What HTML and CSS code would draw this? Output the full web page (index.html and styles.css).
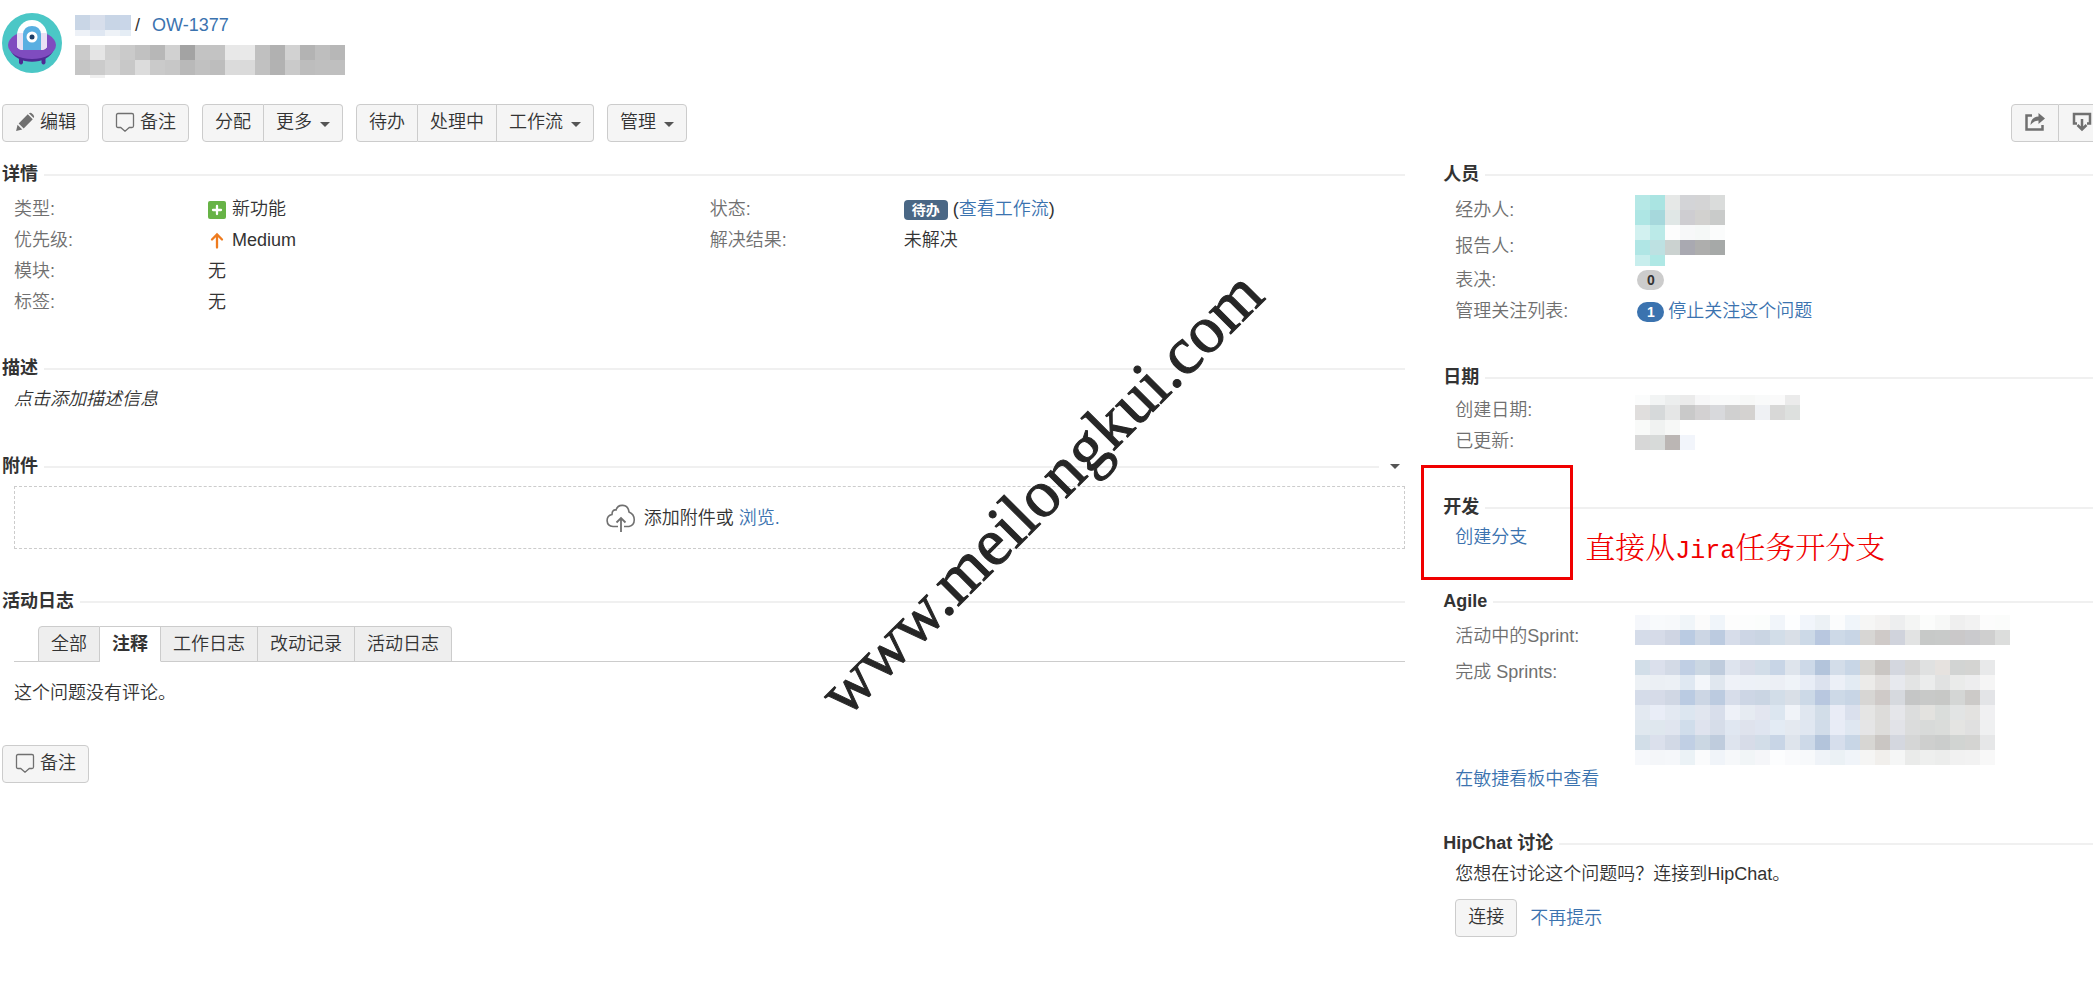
FILE: index.html
```html
<!DOCTYPE html>
<html lang="zh-CN">
<head>
    <meta charset="UTF-8">
    <meta name="viewport" content="width=device-width, initial-scale=1.0">
    <title>OW-1377</title>

    <link rel="stylesheet" href="styles.css">
</head>
<body>
    <!-- shared icons -->
    <svg class="sprite" aria-hidden="true">
        <symbol id="icon-comment" viewBox="0 0 20 20">
            <path d="M3 1.5h14q1.5 0 1.5 1.5v11q0 1.5-1.5 1.5h-2.700L10 19.200 5.700 15.500H3q-1.500 0-1.500-1.500V3q0-1.500 1.500-1.500z" fill="none" stroke="#707070" stroke-width="1.300"/>
        </symbol>
    </svg>

    <header class="issue-header">
        <svg class="avatar" viewBox="0 0 60 60" aria-hidden="true">
            <circle cx="30" cy="30" r="30" fill="#4bc7c6"/>
            <path d="M17 43h4v7q-2 3-4 0zM39.500 43h4v7q-2 3-4 0z" fill="#4f2a93"/>
            <path d="M8 36c5 17 39 17 44 0z" fill="#4f2a93"/>
            <ellipse cx="30" cy="32" rx="24" ry="14" fill="#7f4cbf"/>
            <path d="M15 34V22a15 15 0 0 1 30 0v12q-2 3-6 3H21q-4 0-6-3z" fill="#fff"/>
            <path d="M15 20h6v17q-4 0-6-3zM45 20h-6v17q4 0 6-3z" fill="#e9e0f4"/>
            <path d="M21 37V21q1-8 9-8t9 8v16z" fill="#59afe1"/>
            <circle cx="30" cy="24" r="5.500" fill="#fff"/>
            <circle cx="30" cy="24" r="2.500" fill="#1d3d66"/>
        </svg>
        <div class="issue-title">
            <div class="breadcrumb">
                <svg class="mosaic" data-mosaic="project"></svg>
                <span class="slash">/</span>
                <a href="#">OW-1377</a>
            </div>
            <svg class="mosaic" data-mosaic="summary"></svg>
        </div>
    </header>

    <nav class="toolbar">
        <button type="button" class="btn">
            <svg class="icon" viewBox="0 0 18 18" aria-hidden="true">
                <path d="M1 17l1.300-5.500 4.200 4.200zM3.300 10.300L11.500 2l4.500 4.500-8.200 8.300zM12.500 1.200q1.500-1 3 .3l1 1q1.300 1.500.3 3z" fill="#707070"/>
            </svg>编辑
        </button>
        <button type="button" class="btn"><svg class="icon" aria-hidden="true"><use href="#icon-comment"/></svg>备注</button>
        <div class="btn-group">
            <button type="button" class="btn">分配</button>
            <button type="button" class="btn">更多<span class="caret"></span></button>
        </div>
        <div class="btn-group">
            <button type="button" class="btn">待办</button>
            <button type="button" class="btn">处理中</button>
            <button type="button" class="btn">工作流<span class="caret"></span></button>
        </div>
        <button type="button" class="btn">管理<span class="caret"></span></button>
        <div class="btn-group tools">
            <button type="button" class="btn" aria-label="分享">
                <svg class="icon-tool" viewBox="0 0 20 20" aria-hidden="true">
                    <path d="M7 3.500H1.500v14h16V13" fill="none" stroke="#707070" stroke-width="2.500"/>
                    <path d="M5.500 13q.5-8 8-8.500V1L20 6.500 13.500 12V8.500Q8.500 8.500 5.500 13z" fill="#707070"/>
                </svg>
            </button>
            <button type="button" class="btn" aria-label="导出">
                <svg class="icon-tool" viewBox="0 0 20 20" aria-hidden="true">
                    <path d="M5 11.500H2V2h16v9.500h-3" fill="none" stroke="#707070" stroke-width="2.500"/>
                    <path d="M10 7v10M5.500 13L10 17.500l4.500-4.500" fill="none" stroke="#707070" stroke-width="2.500"/>
                </svg>
            </button>
        </div>
    </nav>

    <div class="content">
        <main>
            <section class="module">
                <h2>详情</h2>
                <div class="details">
                    <dl>
                        <dt>类型:</dt>
                        <dd>
                            <svg class="type-icon" viewBox="0 0 18 18" aria-hidden="true">
                                <rect width="18" height="18" rx="2" fill="#67b346"/>
                                <path d="M9 5v8M5 9h8" stroke="#fff" stroke-width="2.300" stroke-linecap="round"/>
                            </svg>新功能
                        </dd>
                        <dt>优先级:</dt>
                        <dd>
                            <svg class="type-icon" viewBox="0 0 18 18" aria-hidden="true">
                                <path d="M9 15.500V3M4 7.500L9 2.500l5 5" fill="none" stroke="#ee7b1f" stroke-width="2.300" stroke-linecap="round"/>
                            </svg>Medium
                        </dd>
                        <dt>模块:</dt>
                        <dd>无</dd>
                        <dt>标签:</dt>
                        <dd>无</dd>
                    </dl>
                    <dl>
                        <dt>状态:</dt>
                        <dd><span class="status">待办</span>(<a href="#">查看工作流</a>)</dd>
                        <dt>解决结果:</dt>
                        <dd>未解决</dd>
                    </dl>
                </div>
            </section>

            <section class="module">
                <h2>描述</h2>
                <p class="description">点击添加描述信息</p>
            </section>

            <section class="module">
                <h2 class="with-menu">附件<button type="button" class="menu" aria-label="附件选项"><span class="caret"></span></button></h2>
                <div class="dropzone">
                    <svg class="cloud" viewBox="0 0 30 28" aria-hidden="true">
                        <path d="M12 22.500H7C-.5 22-.8 12 6 10.500 6 6.500 8 5.500 10 6c2-6.500 12-6.500 13 2 7 3 7 13 0 14.500h-5" fill="none" stroke="#707070" stroke-width="1.600"/>
                        <path d="M15 28V14M10.500 18.500L15 14l4.500 4.500" fill="none" stroke="#707070" stroke-width="1.800"/>
                    </svg>
                    <span>添加附件或 <a href="#">浏览.</a></span>
                </div>
            </section>

            <section class="module">
                <h2>活动日志</h2>
                <ul class="tabs">
                    <li><a href="#">全部</a></li>
                    <li class="active"><a href="#">注释</a></li>
                    <li><a href="#">工作日志</a></li>
                    <li><a href="#">改动记录</a></li>
                    <li><a href="#">活动日志</a></li>
                </ul>
                <p class="no-comments">这个问题没有评论。</p>
            </section>

            <button type="button" class="btn"><svg class="icon" aria-hidden="true"><use href="#icon-comment"/></svg>备注</button>
        </main>

        <aside>
            <section class="module">
                <h2>人员</h2>
                <dl class="people">
                    <dt>经办人:</dt>
                    <dd class="redacted"><svg class="mosaic" data-mosaic="people"></svg></dd>
                    <dt>报告人:</dt>
                    <dt>表决:</dt>
                    <dd><span class="count">0</span></dd>
                    <dt>管理关注列表:</dt>
                    <dd><span class="count watching">1</span><a href="#">停止关注这个问题</a></dd>
                </dl>
            </section>

            <section class="module">
                <h2>日期</h2>
                <dl class="dates">
                    <dt>创建日期:</dt>
                    <dd class="redacted"><svg class="mosaic" data-mosaic="dates"></svg></dd>
                    <dt>已更新:</dt>
                </dl>
            </section>

            <section class="module dev">
                <h2>开发</h2>
                <p class="dev-link"><a href="#">创建分支</a></p>
                <div class="highlight"></div>
                <div class="note">直接从<span>Jira</span>任务开分支</div>
            </section>

            <section class="module">
                <h2>Agile</h2>
                <dl class="agile">
                    <dt>活动中的Sprint:</dt>
                    <dd class="redacted"><svg class="mosaic" data-mosaic="sprints"></svg></dd>
                    <dt>完成 Sprints:</dt>
                </dl>
                <p class="board-link"><a href="#">在敏捷看板中查看</a></p>
            </section>

            <section class="module">
                <h2>HipChat 讨论</h2>
                <p class="hipchat">您想在讨论这个问题吗？连接到HipChat。</p>
                <div class="hipchat-actions">
                    <button type="button" class="btn">连接</button>
                    <a href="#">不再提示</a>
                </div>
            </section>
        </aside>
    </div>

    <div class="watermark"><span>www.meilongkui.com</span></div>

    <script src="script.js"></script>
</body>
</html>
```
FILE: styles.css
```css
* {
    box-sizing: border-box;
}
body {
    margin: 0;
    padding: 13px 0 0 2px;
    font-family: 'Liberation Sans', 'Noto Sans CJK SC', sans-serif;
    font-size: 18px;
    font-weight: 350;
    line-height: 24px;
    color: #333;
    background-color: #fff;
    overflow-x: hidden;
}
h2, p, dl, dd, ul {
    margin: 0;
    padding: 0;
}
a {
    color: #3b73af;
    text-decoration: none;
}
.sprite {
    position: absolute;
    width: 0;
    height: 0;
}
.mosaic {
    display: block;
}

/* header */
.issue-header {
    display: flex;
    gap: 13px;
}
.avatar {
    width: 60px;
    height: 60px;
}
.breadcrumb {
    display: flex;
    height: 32px;
    padding-top: 2px;
}
.slash {
    line-height: 20px;
    margin: 0 12px 0 4px;
}
.breadcrumb a {
    line-height: 20px;
}

/* buttons */
.toolbar {
    display: flex;
    gap: 13px;
    margin-top: 26px;
}
.btn {
    display: inline-flex;
    align-items: center;
    height: 38px;
    padding: 0 12px 2px;
    font: inherit;
    color: #333;
    white-space: nowrap;
    background-color: #f5f5f5;
    border: 1px solid #ccc;
    border-radius: 4px;
}
.btn-group {
    display: flex;
}
.btn-group .btn {
    border-radius: 0;
}
.btn-group .btn + .btn {
    border-left: 0;
}
.btn-group .btn:first-child {
    border-radius: 4px 0 0 4px;
}
.btn-group .btn:last-child {
    border-radius: 0 4px 4px 0;
}
.icon {
    width: 20px;
    height: 20px;
    margin-right: 5px;
}
.icon-tool {
    width: 20px;
    height: 20px;
}
.caret {
    border: 5px solid transparent;
    border-top-color: #555;
    border-bottom: 0;
}
.btn .caret {
    margin: 4px 0 0 8px;
}
/* the last tool button runs past the window edge */
.tools {
    margin: 0 -13px 0 auto;
}
.tools .btn {
    padding: 0 13px 2px;
}

/* columns */
.content {
    display: grid;
    grid-template-columns: 54fr 25fr;
    gap: 38px;
    margin-top: 20px;
}
main .module {
    margin-bottom: 40px;
}
aside .module {
    margin-bottom: 38px;
}
h2 {
    display: flex;
    align-items: center;
    gap: 6px;
    font-size: 18px;
    line-height: 24px;
    font-weight: 700;
}
h2::after {
    content: '';
    flex: 1;
    height: 2px;
    margin-top: 2px;
    background-color: #f0f0f0;
}
.with-menu .menu {
    order: 1;
    display: flex;
    padding: 0 5px;
    background: none;
    border: 0;
}

dl {
    display: grid;
    grid-template-columns: 194px 1fr;
    grid-auto-rows: 31px;
    align-content: start;
    line-height: 31px;
}
dt {
    grid-column: 1;
    color: #707070;
}
dd {
    grid-column: 2;
    display: flex;
    align-items: center;
}
.details {
    display: grid;
    grid-template-columns: 1fr 1fr;
    padding: 8px 0 0 12px;
    margin-bottom: -2px;
}
.type-icon {
    width: 18px;
    height: 18px;
    margin-right: 6px;
}
.status {
    height: 20px;
    padding: 0 8px;
    margin-right: 5px;
    font-size: 14px;
    font-weight: 700;
    line-height: 20px;
    color: #fff;
    background-color: #4a6785;
    border-radius: 4px;
}
.description {
    min-height: 34px;
    padding: 7px 0 0 12px;
    font-style: italic;
}
.dropzone {
    display: flex;
    align-items: center;
    justify-content: center;
    gap: 8px;
    height: 63px;
    margin: 8px 0 0 12px;
    padding-right: 34px;
    border: 1px dashed #ccc;
}
.cloud {
    width: 30px;
    height: 28px;
}

/* tabs */
.tabs {
    display: flex;
    margin: 13px 0 0 12px;
    padding-left: 24px;
    list-style: none;
    border-bottom: 1px solid #ccc;
}
.tabs li {
    height: 36px;
    margin-bottom: -1px;
    padding: 0 12px;
    line-height: 34px;
    background-color: #eee;
    border: 1px solid #ccc;
    border-left: 0;
}
.tabs li:first-child {
    border-left: 1px solid #ccc;
    border-top-left-radius: 4px;
}
.tabs li:last-child {
    border-top-right-radius: 4px;
}
.tabs a {
    color: #333;
}
.tabs .active {
    font-weight: 700;
    background-color: #fff;
    border-bottom-color: #fff;
}
.no-comments {
    padding: 19px 0 0 12px;
}

/* sidebar */
aside dl {
    grid-template-columns: 180px 1fr;
    padding: 6px 0 0 12px;
}
aside .redacted {
    grid-row: 1 / 3;
    align-items: flex-start;
}
.people {
    grid-template-rows: 36px 36px 32px 31px;
}
.people dt {
    align-self: center;
}
.people .redacted {
    padding-top: 3px;
}
.count {
    min-width: 27px;
    height: 20px;
    margin: 0 4px 0 2px;
    font-size: 14px;
    font-weight: 700;
    line-height: 20px;
    text-align: center;
    background-color: #ccc;
    border-radius: 10px;
}
.watching {
    color: #fff;
    background-color: #3b73af;
}
.dev {
    position: relative;
}
.dev-link {
    padding: 6px 0 2px 12px;
}
.highlight {
    position: absolute;
    top: -30px;
    left: -22px;
    width: 152px;
    height: 115px;
    border: 3px solid #f00000;
}
.note {
    position: absolute;
    top: 34px;
    left: 142px;
    font-family: SimSun, 'Noto Serif CJK SC', 'Noto Sans CJK SC', serif;
    font-size: 30px;
    font-weight: 300;
    line-height: 32px;
    white-space: nowrap;
    color: #f00000;
}
.note span {
    font-family: 'Liberation Mono', monospace;
    font-size: 25px;
}
aside .agile {
    grid-template-rows: 42px 108px;
    padding-top: 2px;
}
.agile dt:first-child {
    line-height: 42px;
}
.board-link {
    padding-left: 12px;
    line-height: 28px;
}
.hipchat {
    padding: 7px 0 0 12px;
}
.hipchat-actions {
    display: flex;
    align-items: center;
    gap: 13px;
    padding: 13px 0 0 12px;
}

.watermark {
    position: fixed;
    inset: 0;
    display: flex;
    align-items: center;
    justify-content: center;
    padding: 0 12px 12px 0;
    pointer-events: none;
}
.watermark span {
    font-family: 'Liberation Serif', serif;
    font-size: 67px;
    font-weight: 400;
    line-height: 67px;
    color: #262626;
    -webkit-text-stroke: 1px #262626;
    transform: rotate(-45deg);
}
```
FILE: script.js
```javascript
// Pixelated blocks: each row is [height, colours...], one cell is 15px wide
const mosaics = {
    project: [
        [15, 'c9d6e6', 'd7deeb', 'c8d5e6', 'c9d6e8'],
        [6, 'edf1f7', 'dfe7f2', 'eef2f7', 'e5edf5']
    ],
    summary: [
        [15, 'cbcbcb', 'e5e5e5', 'd0d0d0', 'cacaca', 'c1c1c1', 'b7b7b7', 'd1d1d1', 'a3a3a3', 'c3c3c3', 'c3c3c3', 'e8e8e8', 'e9e9e9', 'c0c0c0', 'b1b1b1', 'd2d2d2', 'b3b3b3', 'bebebe', 'b7b7b7'],
        [15, 'c5c5c5', 'cbcbcb', 'd4d4d4', 'c8c8c8', 'dcdcdc', 'cacaca', 'c7c7c7', 'b9b9b9', 'c1c1c1', 'bdbdbd', 'dbdbdb', 'dadada', 'c1c1c1', 'b2b2b2', 'cacaca', 'bdbdbd', 'bfbfbf', 'bfbfbf'],
        [3, '', 'f0f0f0']
    ],
    people: [
        [15, 'b5e8e6', 'aae4e2', 'e6e8e7', 'd3d4d7', 'd4d4d5', 'dadcdb'],
        [15, 'aee6e4', 'a6d8dc', 'e0e7e6', 'cecdd1', 'd2d1cf', 'c9cbca'],
        [15, 'd2f1f0', 'bbeae8', 'fdfdfd', 'f7f8f9', 'f5f8f7', 'fbfcfc'],
        [15, 'b0e6e5', 'bde1e2', 'cbd2d0', 'a9a9b1', 'aeaead', 'a6a9a8'],
        [11, 'c8eeed', 'afe8e5']
    ],
    dates: [
        [10, 'fbfcfc', 'f2f4f4', 'eceeee', 'ebebeb', 'f7f7f8', 'f9fafa', 'f9fafa', 'f7f8f7', 'f9fafa', 'fafafa', 'ebebeb'],
        [15, 'e0dedd', 'd6d9da', 'e5e6e6', 'c9c9c9', 'd3d1d2', 'd8d9dc', 'd0d0d0', 'd4d2d0', 'eff1f4', 'd8d8d7', 'dde0de'],
        [15, 'f9faf9', 'f0f2f1', 'f7f8f7'],
        [15, 'd7d7d7', 'd7dad9', 'bbb6b4', 'f2f5fb']
    ],
    sprints: [
        [15, 'f5f7fb', 'f8fafc', 'f7f9fb', 'f0f5f9', 'fbfbfb', 'f0f5fa', 'fdfdfd', 'fcfdfd', 'fbfdfc', 'f1f5fa', 'fdfeff', 'f1f5fb', 'ecf1f5', 'fbfcfd', 'f0f5fa', 'f6f6f5', 'f3f2f1', 'edeeef', 'f4f5f4', 'fbfcfb', 'f7f8f7', 'efefef', 'f2f2f2', 'fcfcfc', 'fbfcfb'],
        [15, 'd5dce9', 'd6dbe8', 'cfd5e3', 'bacbe2', 'ccd6e4', 'bccbe0', 'd7ddea', 'cdd6e5', 'cad5e3', 'd2dde8', 'd9dfe7', 'ccd9e7', 'b8c7df', 'cdd9e7', 'c8d5e5', 'd7d6d4', 'cfcac8', 'd0d3dc', 'e2e3e3', 'c7c9c8', 'c8cac9', 'cac8c9', 'cacacd', 'cfcfcf', 'dcdddc'],
        [15],
        [15, 'd2dee8', 'dbe0ec', 'd3dae6', 'c0cfe4', 'cbd7e3', 'bfccdd', 'dee4ee', 'd7dce8', 'd2dde8', 'c8d5e6', 'dee4ec', 'cdd9e8', 'b3c4db', 'd3dde9', 'c8d6e6', 'd7d6d3', 'cac6c3', 'd4d7df', 'd6d6d6', 'e0e1e1', 'e6e2df', 'd2d4d3', 'd4d4d2', 'e8e9ea'],
        [15, 'edf1f5', 'ebeff4', 'ecf0f5', 'dfe8f2', 'f3f6fa', 'e0e7ef', 'eff2f8', 'edf1f7', 'edf1f6', 'eceff5', 'eff3f8', 'e8edf6', 'dce2ee', 'ecf0f7', 'e3ebf3', 'ecebe9', 'e2dfdd', 'e7e9ee', 'e3e4e4', 'ebecec', 'e1e2e2', 'eaebea', 'ededee', 'f5f5f5'],
        [15, 'd5dce9', 'd6dbe8', 'd0d7e4', 'bacbe2', 'ccd6e4', 'bccbe0', 'd7ddea', 'cdd6e5', 'cad5e3', 'd2dde8', 'd9dfe7', 'ccd9e7', 'b8c7df', 'cdd9e7', 'c8d5e5', 'd7d6d4', 'cfcac8', 'd6d9de', 'c5c6c6', 'c8c9c8', 'c7c8c6', 'd4d6d5', 'cccac8', 'e3e4e7'],
        [15, 'e3e9f1', 'e9edf7', 'e3e9f2', 'dce6f0', 'e1e6ef', 'd8deeb', 'eef1f8', 'e6ebf2', 'e3e6f0', 'dce6f0', 'f0f3f8', 'e0e7f0', 'd2dde8', 'e9ecf6', 'dae0ed', 'e5e5e4', 'dddcda', 'e5e6ea', 'dcdddd', 'e3e2df', 'dadddb', 'e2e4e4', 'e3e2e0', 'f0f0f2'],
        [15, 'e0e8ef', 'dfe7ee', 'e0e5ef', 'd0ddeb', 'dfe3ee', 'd6dde9', 'e0e7f1', 'dfe3ed', 'dfe5f0', 'e3ebf4', 'e4e9f0', 'e0e7f1', 'd1dce9', 'e8ecf6', 'dfe7f1', 'e5e5e6', 'dddcda', 'e2e3e8', 'dbdcdc', 'd8dad9', 'dadcda', 'e4e4e2', 'e0e0e0', 'eff0f1'],
        [15, 'd2dee8', 'dbe0ec', 'd2d9e6', 'c0cfe4', 'cbd7e3', 'bfccdd', 'dee4ee', 'd7dce8', 'd2dde8', 'c8d5e6', 'dee4ec', 'cdd9e8', 'b3c4db', 'd6deec', 'c8d6e6', 'd7d6d3', 'cac6c3', 'd4d7df', 'd5d6d6', 'cecfce', 'cbcdcc', 'd1d4d2', 'd4d4d2', 'e6e7e8'],
        [15, 'f6f8fb', 'f4f6f9', 'f5f7fa', 'ebf2f6', 'fafbfc', 'f0f4f9', 'f6f8fa', 'f1f5f7', 'f5f6f9', 'fcfdfe', 'f9fafc', 'f7f9fb', 'eff3f8', 'ebf1f5', 'f0f4f9', 'f5f5f4', 'f1efec', 'f5f6f6', 'eaebea', 'eeefee', 'ecedec', 'f1f1f1', 'f2f2f2', 'f8f8f8']
    ]
};

const cell = 15;

document.querySelectorAll('[data-mosaic]').forEach(function(svg) {
    const name = svg.dataset.mosaic;
    const rows = mosaics[name];
    const columns = Math.max(...rows.map(row => row.length - 1));
    // The project name block ends mid-cell
    const width = name === 'project' ? 56 : columns * cell;
    let y = 0;

    svg.setAttribute('shape-rendering', 'crispEdges');
    svg.setAttribute('width', width);

    rows.forEach(function([height, ...colors]) {
        colors.forEach(function(color, i) {
            if (!color) return;
            const rect = document.createElementNS('http://www.w3.org/2000/svg', 'rect');
            rect.setAttribute('x', i * cell);
            rect.setAttribute('y', y);
            rect.setAttribute('width', cell);
            rect.setAttribute('height', height);
            rect.setAttribute('fill', '#' + color);
            svg.appendChild(rect);
        });
        y += height;
    });

    svg.setAttribute('height', y);
});
```
